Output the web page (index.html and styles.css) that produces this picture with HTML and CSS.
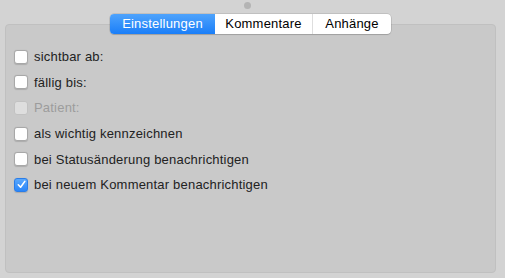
FILE: index.html
```html
<!DOCTYPE html>
<html>
<head lang="de">
    <meta charset="UTF-8">
    <title>Einstellungen</title>
    <link rel="stylesheet" href="styles.css">
</head>
<body>
    <div class="win">
        <div class="dot"></div>
        <div class="tabs">
            <span class="tab current">Einstellungen</span>
            <span class="tab">Kommentare</span>
            <span class="tab last">Anhänge</span>
        </div>
        <div class="panel">
            <ul class="opts">
                <li><span class="cb"></span>sichtbar ab:</li>
                <li><span class="cb"></span>fällig bis:</li>
                <li class="off"><span class="cb"></span>Patient:</li>
                <li><span class="cb"></span>als wichtig kennzeichnen</li>
                <li><span class="cb"></span>bei Statusänderung benachrichtigen</li>
                <li><span class="cb on"><svg width="9" height="9" viewBox="0 0 9 9"><path d="M1.3 4.8 L3.6 7.2 L7.8 1.4" fill="none" stroke="#fff" stroke-width="1.6" stroke-linecap="round" stroke-linejoin="round"/></svg></span>bei neuem Kommentar benachrichtigen</li>
            </ul>
        </div>
    </div>
</body>
</html>
```

FILE: styles.css
```css
body, ul, li {
    margin: 0;
    padding: 0;
    list-style: none;
}

body {
    background: #d3d3d3;
    font-family: "Liberation Sans", Arial, sans-serif;
    font-size: 13px;
    letter-spacing: 0.2px;
    color: #222;
}

.win {
    width: 491px;
    height: 278px;
    padding: 0 9px 0 5px;
    display: flex;
    flex-direction: column;
    align-items: center;
}

.dot {
    width: 7px;
    height: 7px;
    margin-top: 2px;
    margin-left: -7px;
    border-radius: 50%;
    background: #b4b4b4;
}

.tabs {
    display: flex;
    margin-top: 5px;
    height: 20px;
    border-radius: 4px;
    background: #fff;
    box-shadow: 0 0 0 0.5px rgba(0, 0, 0, 0.18), 0 1px 1px rgba(0, 0, 0, 0.12);
    position: relative;
    z-index: 1;
}

.tab {
    height: 20px;
    line-height: 20px;
    text-align: center;
    color: #000;
    border-right: 1px solid #dedede;
}

.tab:nth-child(1) {
    width: 105px;
}

.tab:nth-child(2) {
    width: 97px;
}

.tab.last {
    width: 78px;
    border-right: none;
}

.tab.current {
    color: #fff;
    background: linear-gradient(#4ea3fc, #1a7ef8);
    border-radius: 4px 0 0 4px;
    border-right: none;
}

.panel {
    box-sizing: border-box;
    align-self: stretch;
    flex: none;
    height: 249px;
    margin-top: -10px;
    background: #c9c9c9;
    border: 1px solid #c0c0c0;
    border-radius: 4px;
    padding: 19px 0 0 8px;
}

.opts li {
    height: 25.6px;
    display: flex;
    align-items: center;
}

.cb {
    width: 12px;
    height: 12px;
    margin-right: 6px;
    background: #fff;
    border: 0.5px solid #a8a8a8;
    border-radius: 3px;
    box-shadow: 0 0.5px 1px rgba(0, 0, 0, 0.15);
    display: flex;
    align-items: center;
    justify-content: center;
}

.cb.on {
    background: linear-gradient(#5aa8fc, #2a86f9);
    border-color: #2a7de8;
}

.off {
    color: #9c9c9c;
}

.off .cb {
    background: #dedede;
    border-color: #c2c2c2;
    box-shadow: none;
}
```
